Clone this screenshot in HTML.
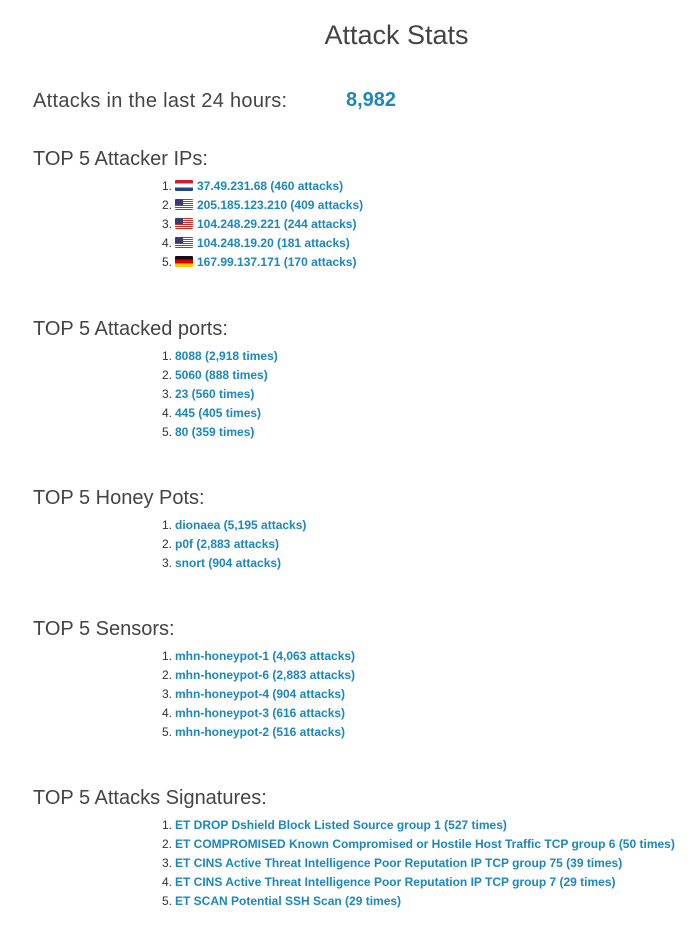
<!DOCTYPE html>
<html><head><meta charset="utf-8"><style>
body{margin:0;width:698px;height:929px;background:#fff;font-family:"Liberation Sans",sans-serif;position:relative;overflow:hidden}
.a{position:absolute;white-space:nowrap}
.h{font-size:20px;color:#444;left:33px;line-height:24px;letter-spacing:0px}
.t{font-size:27px;color:#444;left:0;width:793px;text-align:center;top:20px}
.r{font-size:12px;line-height:14px;color:#333}
.r b{color:#1a87bf}
.n{display:inline-block;width:13px}
.f{display:inline-block;width:18px;height:11px;vertical-align:-1px;margin-right:4px;border-radius:1px}
.nl{background:linear-gradient(#c8202f 0 33%,#fff 33% 66%,#21468b 66%)}
.de{background:linear-gradient(#111 0 33%,#d00 33% 66%,#fc0 66%)}
.us{background:linear-gradient(90deg,#3c3b6e 0 8px,transparent 8px) 0 0/18px 6px no-repeat,repeating-linear-gradient(#d22 0 1px,#fff 1px 2px)}
</style></head><body>
<div class="a t">Attack Stats</div>
<div class="a h" style="top:89px;letter-spacing:0.3px">Attacks in the last 24 hours:</div>
<div class="a" style="left:346px;top:89px;font-size:20px;font-weight:bold;color:#1a87bf">8,982</div>

<div class="a h" style="top:147px">TOP 5 Attacker IPs:</div>
<div class="a r" style="left:162px;top:179px"><span class="n">1.</span><span class="f nl"></span><b>37.49.231.68 (460 attacks)</b></div>
<div class="a r" style="left:162px;top:198px"><span class="n">2.</span><span class="f us"></span><b>205.185.123.210 (409 attacks)</b></div>
<div class="a r" style="left:162px;top:217px"><span class="n">3.</span><span class="f us"></span><b>104.248.29.221 (244 attacks)</b></div>
<div class="a r" style="left:162px;top:236px"><span class="n">4.</span><span class="f us"></span><b>104.248.19.20 (181 attacks)</b></div>
<div class="a r" style="left:162px;top:255px"><span class="n">5.</span><span class="f de"></span><b>167.99.137.171 (170 attacks)</b></div>

<div class="a h" style="top:317px">TOP 5 Attacked ports:</div>
<div class="a r" style="left:162px;top:349px"><span class="n">1.</span><b>8088 (2,918 times)</b></div>
<div class="a r" style="left:162px;top:368px"><span class="n">2.</span><b>5060 (888 times)</b></div>
<div class="a r" style="left:162px;top:387px"><span class="n">3.</span><b>23 (560 times)</b></div>
<div class="a r" style="left:162px;top:406px"><span class="n">4.</span><b>445 (405 times)</b></div>
<div class="a r" style="left:162px;top:425px"><span class="n">5.</span><b>80 (359 times)</b></div>

<div class="a h" style="top:486px">TOP 5 Honey Pots:</div>
<div class="a r" style="left:162px;top:518px"><span class="n">1.</span><b>dionaea (5,195 attacks)</b></div>
<div class="a r" style="left:162px;top:537px"><span class="n">2.</span><b>p0f (2,883 attacks)</b></div>
<div class="a r" style="left:162px;top:556px"><span class="n">3.</span><b>snort (904 attacks)</b></div>

<div class="a h" style="top:617px">TOP 5 Sensors:</div>
<div class="a r" style="left:162px;top:649px"><span class="n">1.</span><b>mhn-honeypot-1 (4,063 attacks)</b></div>
<div class="a r" style="left:162px;top:668px"><span class="n">2.</span><b>mhn-honeypot-6 (2,883 attacks)</b></div>
<div class="a r" style="left:162px;top:687px"><span class="n">3.</span><b>mhn-honeypot-4 (904 attacks)</b></div>
<div class="a r" style="left:162px;top:706px"><span class="n">4.</span><b>mhn-honeypot-3 (616 attacks)</b></div>
<div class="a r" style="left:162px;top:725px"><span class="n">5.</span><b>mhn-honeypot-2 (516 attacks)</b></div>

<div class="a h" style="top:786px">TOP 5 Attacks Signatures:</div>
<div class="a r" style="left:162px;top:818px"><span class="n">1.</span><b>ET DROP Dshield Block Listed Source group 1 (527 times)</b></div>
<div class="a r" style="left:162px;top:837px"><span class="n">2.</span><b>ET COMPROMISED Known Compromised or Hostile Host Traffic TCP group 6 (50 times)</b></div>
<div class="a r" style="left:162px;top:856px"><span class="n">3.</span><b>ET CINS Active Threat Intelligence Poor Reputation IP TCP group 75 (39 times)</b></div>
<div class="a r" style="left:162px;top:875px"><span class="n">4.</span><b>ET CINS Active Threat Intelligence Poor Reputation IP TCP group 7 (29 times)</b></div>
<div class="a r" style="left:162px;top:894px"><span class="n">5.</span><b>ET SCAN Potential SSH Scan (29 times)</b></div>
</body></html>
